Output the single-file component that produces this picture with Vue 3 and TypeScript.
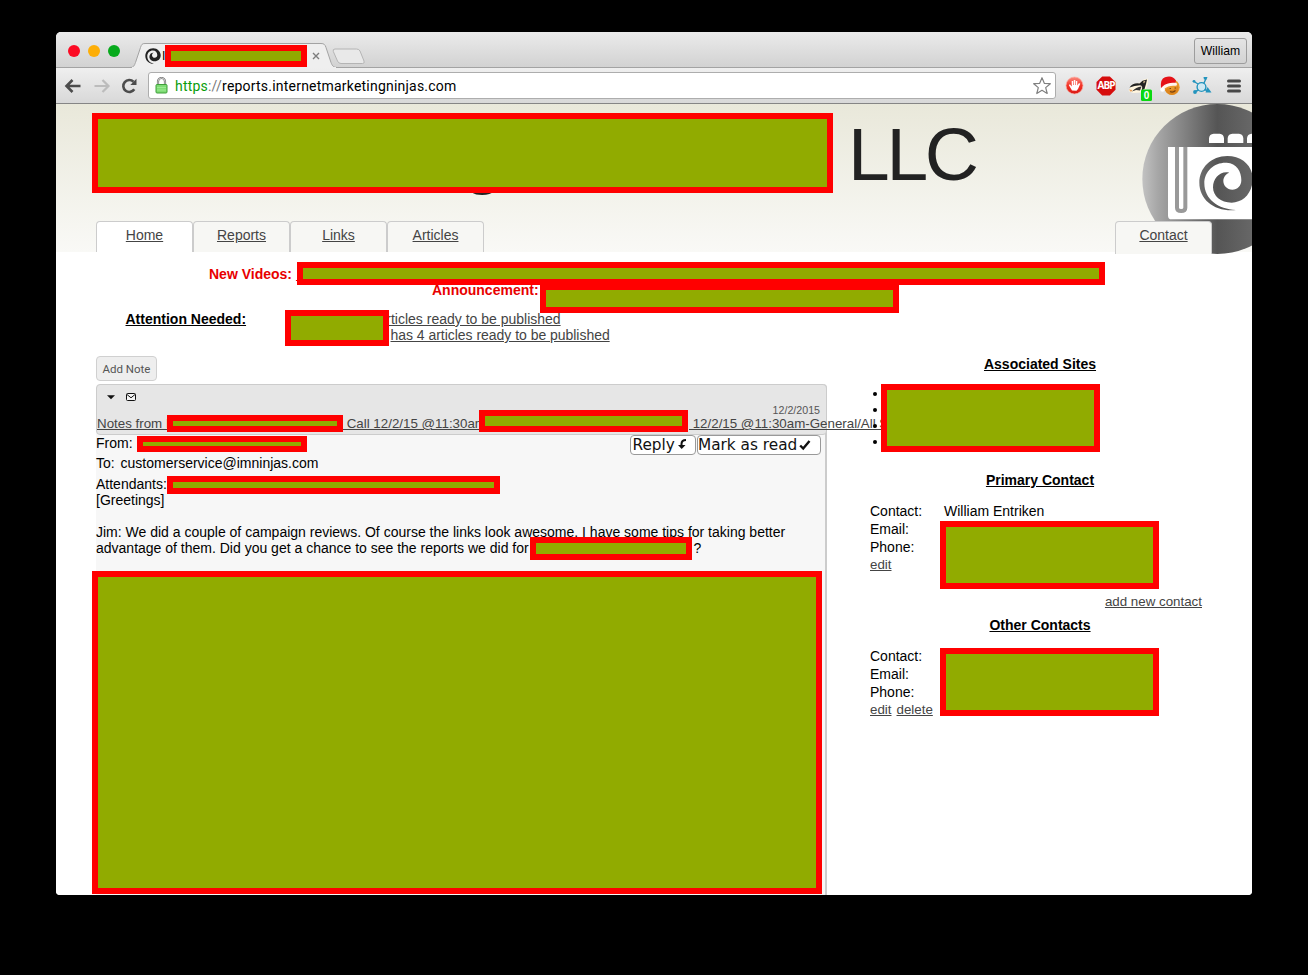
<script setup lang="ts">
interface Redaction { x: number; y: number; w: number; h: number }

const redactions: Redaction[] = [
  { x: 165, y: 45, w: 142, h: 22 },
  { x: 92, y: 113, w: 741, h: 80 },
  { x: 297, y: 262, w: 808, h: 23 },
  { x: 540, y: 284, w: 359, h: 29 },
  { x: 285, y: 310, w: 104, h: 36 },
  { x: 167, y: 415, w: 176, h: 17 },
  { x: 479, y: 410, w: 209, h: 22 },
  { x: 137, y: 436, w: 170, h: 16 },
  { x: 167, y: 476, w: 333, h: 18 },
  { x: 530, y: 537, w: 162, h: 23 },
  { x: 92, y: 571, w: 730, h: 323 },
  { x: 881, y: 384, w: 219, h: 68 },
  { x: 940, y: 521, w: 219, h: 68 },
  { x: 940, y: 648, w: 219, h: 68 },
]
const place = (r: Redaction) => ({ left: `${r.x}px`, top: `${r.y}px`, width: `${r.w}px`, height: `${r.h}px` })

const tabs = ['Home', 'Reports', 'Links', 'Articles']
const swirl =
  'M438 330C375 336 328 300 328 248C328 203 364 168 412 168C458 168 490 200 488 240C486 282 458 308 425 308C392 308 369 288 369 262C369 235 390 212 418 218C407 222 400 232 400 243C400 256 411 269 427 269C442 269 454 258 454 240C454 215 440 190 410 188C375 186 343 212 343 250C343 298 385 328 438 330Z'
</script>

<template>
  <div class="desktop">
    <div class="window">
      <div class="tabstrip">
        <div class="lights"><i class="red"></i><i class="amber"></i><i class="green"></i></div>
        <div class="btab">
          <svg class="btab-shape" width="208" height="25" viewBox="0 0 208 25">
            <path d="M0 24.5C4 24.5 4.500 22 5.500 19.500L10.500 4.500C11.500 1.500 12 .5 15 .5H191C194 .5 195 1.500 196 4.500L201 19.500C202 22 203 24.500 207 24.500" fill="#efefef" stroke="#a3a3a3" />
            <path d="M2 24.500H206" stroke="#efefef" />
          </svg>
          <svg class="favicon" width="16" height="16" viewBox="0 0 16 16">
            <path d="M8.200 15.600A7.700 7.700 0 1 1 15.600 8.600" fill="none" stroke="#222" stroke-width="0" />
            <path d="M9 15.800C4 16 .3 12.500 .3 8C.3 3.500 3.800 .2 8.200 .2C12.500 .2 15.700 3.500 15.700 7.300C15.700 11 13 13.300 9.800 13.300C6.500 13.300 4.400 11.200 4.400 8.700C4.400 6.200 6.300 4.500 8.700 4.700C7.500 5.200 7 6.200 7 7.200C7 8.700 8.200 9.800 9.700 9.800C11.200 9.800 12.300 8.700 12.300 7C12.300 4.500 10.500 2.600 7.900 2.600C4.700 2.600 2.300 5 2.300 8.300C2.300 12.500 5 15 9 15.800Z" fill="#222" />
          </svg>
          <span class="btab-title">I</span>
          <svg class="close" width="8" height="8" viewBox="0 0 8 8"><path d="M1 1L7 7M7 1L1 7" stroke="#7d7d7d" stroke-width="1.400" /></svg>
        </div>
        <svg class="newtab" width="34" height="17" viewBox="0 0 34 17">
          <path d="M3 1H24.500Q27 1 28 3L32 13Q33 15.500 30.500 15.500H9Q6.500 15.500 5.500 13L1.300 3.500Q.5 1 3 1Z" fill="#e9e9e9" stroke="#b4b4b4" />
        </svg>
        <button class="user">William</button>
      </div>

      <div class="toolbar">
        <svg class="back" width="18" height="16" viewBox="0 0 18 16"><path d="M8.500 2L2.500 8L8.500 14M3 8H16.500" fill="none" stroke="#4c4c4c" stroke-width="2.600" /></svg>
        <svg class="fwd" width="18" height="16" viewBox="0 0 18 16"><path d="M9.500 2L15.500 8L9.500 14M15 8H1.500" fill="none" stroke="#bcbcbc" stroke-width="2.200" /></svg>
        <svg class="reload" width="16" height="16" viewBox="0 0 16 16"><path d="M13.300 11.300A6 6 0 1 1 12.500 3.700" fill="none" stroke="#4c4c4c" stroke-width="2.600" /><path d="M15.500 .8V7H9.300Z" fill="#4c4c4c" /></svg>
        <div class="omnibox">
          <svg class="lock" width="13" height="17" viewBox="0 0 13 17">
            <path d="M3 8V4.500A3.500 3.500 0 0 1 10 4.500V8" fill="none" stroke="#777" stroke-width="2.200" />
            <path d="M3 8V4.500A3.500 3.500 0 0 1 10 4.500V8" fill="none" stroke="#ddd" stroke-width=".8" />
            <rect x="1" y="7.500" width="11" height="8.500" rx="1" fill="#7edc74" stroke="#3f9f3a" />
            <path d="M2 10.500H11M2 13H11" stroke="#9cea92" />
          </svg>
          <span class="url"><span class="secure">https</span><span class="slashes">://</span>reports.internetmarketingninjas.com</span>
          <svg class="star" width="20" height="20" viewBox="0 0 20 20"><path d="M10 1.700L12.300 7.300L18.300 7.700L13.700 11.600L15.200 17.500L10 14.300L4.800 17.500L6.300 11.600L1.700 7.700L7.700 7.300Z" fill="#fff" stroke="#808080" stroke-width="1.200" stroke-linejoin="round" /></svg>
        </div>
        <svg class="ext" width="20" height="20" viewBox="0 0 20 20">
          <defs><linearGradient id="hand" x2="0" y2="1"><stop offset="0" stop-color="#fb8c80" /><stop offset=".5" stop-color="#f23427" /><stop offset="1" stop-color="#d91813" /></linearGradient></defs>
          <circle cx="10.500" cy="9.500" r="8.500" fill="url(#hand)" stroke="#f9b1a8" stroke-width=".7" />
          <path d="M8 14.500L4.800 9L6 8.300L7.700 10.500V5H9.200V9L9.800 9V4H11.300V9H11.900V5H13.300V9.500L15 7L16.300 7.800L14 13L12.500 14.800Z" fill="#fff" />
        </svg>
        <svg class="ext" width="20" height="20" viewBox="0 0 20 20">
          <path d="M6.200 .5H13.800L19.500 6V13.800L13.800 19.500H6.200L.5 13.800V6Z" fill="#d60d0d" />
          <text x="10" y="13.400" class="abp" text-anchor="middle">ABP</text>
        </svg>
        <svg class="ext badger" width="24" height="24" viewBox="0 0 24 24">
          <path d="M.5 14L4 7.500L12 5.500L15.500 2.500L20 1.500L20 6L18 12L13 15.500L5 16Z" fill="#fff5de" />
          <path d="M1.500 10.500Q5 5.500 11.500 6.500L14.500 3.800L19 2.500L18 7L16.500 12L13.500 13.500Q15.500 8.500 12 8.200Q6.500 8.500 1.500 10.500Z" fill="#222" />
          <path d="M4 14.500Q8 10 13.500 9.500L12 13.500L8 13Z" fill="#333" /><path d="M1 12.500L4.500 13L3 15Z" fill="#e79c55" /><path d="M15 4.800L17.500 3.800L16 6.500Z" fill="#e6c89c" />
          <rect x="13" y="12.500" width="11" height="11.500" rx="1.500" fill="#0ad810" />
          <text x="18.500" y="21.500" class="badge" text-anchor="middle">0</text>
        </svg>
        <svg class="ext" width="20" height="20" viewBox="0 0 20 20">
          <circle cx="12" cy="11.300" r="7.700" fill="#e99a2f" /><path d="M8 12Q13 17 18 9Q20 16 14 18.500Q8 20 5 14Z" fill="#dd861e" />
          <path d="M1 12Q0 3 5 1.300Q12-1.500 16 4.500L15 8.500Q9 6 3.500 12Z" fill="#e51218" />
          <path d="M3.500 11.500Q8 7.500 15.500 8.300" fill="none" stroke="#fff4ec" stroke-width="3" stroke-linecap="round" /><circle cx="2.500" cy="13.500" r="2.200" fill="#fff" />
          <path d="M9.500 12.500h1.500M14.500 12h1.500M10 15.500Q13 17 15.500 14.500" stroke="#7a4310" fill="none" stroke-width="1.200" />
        </svg>
        <svg class="ext" width="20" height="20" viewBox="0 0 20 20">
          <g fill="none" stroke="#2394bd" stroke-width="1.400"><circle cx="9.500" cy="11" r="4.400" fill="#cfe9f3" /><path d="M6 8L2 5.500M11.800 7.500L14 2.500M6.500 14L2.500 16M12.500 13.500L17.500 15.500" /></g>
          <g fill="#2394bd"><circle cx="2" cy="5.300" r="1.400" /><path d="M11.500 1H15.500L14.500 3.500H12Z" /><circle cx="3" cy="16" r="1.900" /><path d="M15.500 11L19.500 16.500L13.500 16.500Z" /></g>
        </svg>
        <svg class="menu" width="14" height="14" viewBox="0 0 14 14"><path d="M1.500 2H12.500M1.500 7H12.500M1.500 12H12.500" stroke="#484848" stroke-width="3" stroke-linecap="round" /></svg>
      </div>

      <main class="page">
        <header class="banner">
          <svg class="logo" width="110" height="150" viewBox="156 12 330 450">
            <defs><linearGradient id="disc" gradientUnits="userSpaceOnUse" x1="157" x2="607" y1="0" y2="0"><stop offset="0" stop-color="#c2c2c2" /><stop offset=".1" stop-color="#a7a7a7" /><stop offset=".5" stop-color="#555" /><stop offset=".72" stop-color="#666" /><stop offset="1" stop-color="#aaa" /></linearGradient></defs>
            <circle cx="382" cy="237" r="225" fill="url(#disc)" />
            <path d="M357 129V115Q358 102 371 101H389Q401 102 402 115V129ZM413 129V115Q414 102 427 101H447Q459 102 460 115V129ZM471 129V115Q472 102 485 101H520V129Z" fill="#fff" />
            <path d="M234 141H520V358H245Q234 358 234 347Z" fill="#fff" />
            <path d="M261 141V323Q261 333 273.500 333Q286 333 286 323V141" fill="none" stroke="#999" stroke-width="12" />
            <path :d="swirl" fill="url(#disc)" />
          </svg>
          <h1><span class="g">g</span><span>LLC</span></h1>
          <nav>
            <a v-for="(t, i) in tabs" :key="t" :class="{ active: i === 0 }">{{ t }}</a>
            <a class="contact">Contact</a>
          </nav>
        </header>

        <section class="notices">
          <p class="videos">New Videos: <u>&nbsp;</u></p>
          <p class="announce">Announcement:</p>
        </section>

        <section class="attention">
          <b>Attention Needed:</b>
          <div class="alerts"><a class="first">articles ready to be published</a><a class="second">has 4 articles ready to be published</a></div>
        </section>

        <div class="columns">
          <div class="left">
            <button class="add">Add Note</button>
            <article class="note">
              <div class="note-head">
                <div class="icons">
                  <svg width="8" height="5" viewBox="0 0 8 5"><path d="M0 .3H8L4 4.300Z" fill="#111" /></svg>
                  <svg width="10" height="8" viewBox="0 0 10 8"><rect x=".5" y=".5" width="9" height="7" rx="1" fill="#f4f4f4" stroke="#111" /><path d="M1 1.500L5 4.800L9 1.500" fill="none" stroke="#111" /></svg>
                </div>
                <div class="date">12/2/2015</div>
                <a class="subject"><span class="s1">Notes from M</span><span class="s2">&nbsp;Call 12/2/15 @11:30am</span><span class="s3">&nbsp;12/2/15 @11:30am-General/All S</span></a>
              </div>
              <div class="note-body">
                <div class="from">
                  <span>From:</span>
                  <div class="actions">
                    <button class="reply">Reply<svg width="10" height="12" viewBox="0 0 10 12"><path d="M8 1Q3.500 1 3.500 5V8" fill="none" stroke="#111" stroke-width="2" /><path d="M0 6H7.500L3.700 10Z" fill="#111" /></svg></button>
                    <button class="mark">Mark as read<svg width="12" height="12" viewBox="0 0 12 12"><path d="M1.200 6.500L4.200 9.500L10.500 2" fill="none" stroke="#111" stroke-width="2.400" /></svg></button>
                  </div>
                </div>
                <div class="to">To: <span>customerservice@imninjas.com</span></div>
                <div>Attendants:</div>
                <div>[Greetings]</div>
                <p>Jim: We did a couple of campaign reviews. Of course the links look awesome. I have some tips for taking better<br />advantage of them. Did you get a chance to see the reports we did for <span class="q">?</span></p>
              </div>
            </article>
          </div>

          <aside>
            <h2>Associated Sites</h2>
            <ul><li v-for="n in 4" :key="n"></li></ul>
            <h2>Primary Contact</h2>
            <dl><dt>Contact:</dt><dd>William Entriken</dd><dt>Email:</dt><dd></dd><dt>Phone:</dt><dd></dd></dl>
            <div class="links"><a>edit</a></div>
            <div class="more"><a>add new contact</a></div>
            <h2>Other Contacts</h2>
            <dl><dt>Contact:</dt><dd></dd><dt>Email:</dt><dd></dd><dt>Phone:</dt><dd></dd></dl>
            <div class="links"><a>edit</a><a>delete</a></div>
          </aside>
        </div>
      </main>
    </div>

    <div v-for="(r, i) in redactions" :key="i" class="redaction" :style="place(r)"></div>
  </div>
</template>

<style>
body { background: #000; overflow: hidden; }
</style>

<style scoped>
* { box-sizing: border-box; }
.desktop { position: relative; width: 1308px; height: 975px; padding: 32px 56px 80px; background: #000; overflow: hidden; font: 14px/16px "Liberation Sans", Arial, sans-serif; color: #000; }
.window { width: 1196px; height: 863px; border-radius: 5px 5px 4px 4px; overflow: hidden; background: #fff; }
svg { display: block; flex: none; }
button { padding: 0; margin: 0; color: inherit; }
.redaction { position: absolute; background: #91ab00; border: 6px solid #f00; }

.tabstrip { display: flex; height: 36px; background: linear-gradient(#ebebeb, #d2d2d2); border-bottom: 1px solid #a3a3a3; }
.lights { display: flex; gap: 8px; padding: 13px 0 0 12px; width: 74px; }
.lights i { width: 12px; height: 12px; border-radius: 50%; }
.red { background: #fc0b24; }
.amber { background: #fdae07; }
.green { background: #07aa1c; }
.btab { position: relative; display: flex; width: 208px; height: 25px; margin-top: 11px; align-items: center; padding-left: 15px; flex: none; }
.btab-shape { position: absolute; left: 0; top: 0; }
.favicon, .btab-title, .close { position: relative; }
.btab-title { margin-left: 1px; width: 150px; font-size: 12px; }
.newtab { margin: 16px 0 0 -6px; }
.user { margin: 6px 5px 0 auto; width: 53px; height: 26px; border: 1px solid #9d9d9d; border-radius: 3px; background: linear-gradient(#e4e4e4, #d3d3d3); font: 12.200px "Liberation Sans", Arial, sans-serif; }

.toolbar { display: flex; align-items: center; height: 36px; padding-left: 8px; background: linear-gradient(#efefef, #d8d8d8); border-bottom: 1px solid #858585; }
.fwd { margin-left: 11px; }
.reload { margin-left: 10px; }
.omnibox { display: flex; align-items: center; width: 908px; height: 27px; margin-left: 11px; padding: 0 3px 0 6px; border: 1px solid #adadad; border-radius: 3px; background: #fff; flex: none; }
.url { margin-left: 7px; font: 14px/18px Roboto, sans-serif; letter-spacing: .21px; }
.secure { color: #0a9d0a; }
.slashes { color: #777; }
.star { margin-left: auto; }
.ext { margin-left: 12px; overflow: visible; }
.omnibox + .ext { margin-left: 8px; }
.badger { margin: 7px -4px 0 12px; }
.abp { font: bold 10px "Open Sans", "Liberation Sans", sans-serif; letter-spacing: -1px; fill: #fff; }
.badge { font: bold 10px "Liberation Sans", sans-serif; fill: #fff; }
.menu { margin-left: 15px; }

.page { height: 791px; background: #fff; }
.banner { position: relative; height: 148px; padding: 0 40px; background: linear-gradient(#e9e8da, #f9f9f6); }
.logo { position: absolute; right: 0; top: 0; }
h1 { display: flex; margin: 0; height: 117px; padding: 8px 0 0 366px; font-size: 75px; line-height: 84px; font-weight: 400; letter-spacing: -3.300px; color: #222; }
.g { width: 386px; }
nav { position: relative; display: flex; }
nav a { width: 97px; height: 31px; padding-top: 5px; border: 1px solid #ccc; border-bottom: 0; border-radius: 4px 4px 0 0; background: #f7f7f4; color: #444; text-align: center; line-height: 17px; text-decoration: underline; }
nav a.active { background: #fff; }
nav .contact { margin-left: auto; height: 33px; }
a { color: #444; text-decoration: underline; white-space: nowrap; }

.notices { padding-top: 14px; font-weight: 700; color: #e80000; }
.notices p { margin: 0; }
.videos { padding-left: 153px; }
.announce { padding-left: 376px; }
.attention { display: flex; padding: 13px 0 0 69.500px; height: 58px; }
.attention b { width: 120px; white-space: nowrap; text-decoration: underline; }
.alerts { display: flex; flex-direction: column; margin-left: 133px; }
.second { margin-left: 12px; letter-spacing: -.03px; }

.columns { display: flex; padding-left: 40px; }
.left { width: 731px; }
.add { display: block; width: 61px; height: 25px; border: 1px solid #d0d0d0; border-radius: 4px; background: #eee; color: #555; font: 11.500px Roboto, sans-serif; }
.note { margin-top: 3px; height: 530px; border-right: 2px solid #ccc; border-radius: 4px 4px 0 0; background: #f7f7f7; }
.note-head { width: 731px; height: 51px; border: 1px solid #ccc; border-radius: 4px; background: #e6e6e6; }
.icons { display: flex; align-items: center; gap: 11px; height: 20px; padding: 4px 0 0 10px; }
.date { height: 11px; padding-right: 6px; font-size: 10.670px; line-height: 11px; text-align: right; color: #555; }
.subject { display: flex; font-size: 13.330px; }
.s1 { width: 246px; }
.s2 { width: 346px; }
.subject span { flex: none; text-decoration: underline; }
.note-body > div { height: 16px; }
.note-body .from { display: flex; justify-content: space-between; height: 20px; }
.note-body .to { height: 21px; }
.to span { margin-left: 2px; }
.actions { display: flex; gap: 1px; padding-right: 4px; }
.actions button { display: flex; align-items: center; height: 20px; border: 1px solid #999; border-radius: 4px; background: #fff; font: 15.300px "DejaVu Sans", Verdana, sans-serif; white-space: nowrap; color: #111; }
.actions .reply { width: 66px; padding-left: 1.500px; }
.reply svg { margin-left: 3px; }
.mark { width: 124px; }
.mark svg { margin-left: 2px; }
.note-body p { margin: 16px 0 0; white-space: nowrap; }
.q { margin-left: 161px; }

aside { width: 344px; margin-left: 41px; }
h2 { margin: 0; font-size: 14px; line-height: 16px; text-align: center; text-decoration: underline; }
ul { list-style: none; margin: 14px 0 22px; padding: 0 0 0 4.500px; }
li { display: flex; align-items: center; height: 16px; }
li::before { content: ""; width: 4.500px; height: 4.500px; border-radius: 50%; background: #000; }
dl { display: grid; grid-template-columns: 74px 1fr; grid-auto-rows: 18px; line-height: 18px; margin: 14px 0 0 2px; }
dd { margin: 0; }
.links { display: flex; gap: 5px; margin-left: 2px; font-size: 13.330px; line-height: 17px; }
.more { height: 29px; padding: 21px 10px 0 0; text-align: right; font-size: 13.330px; margin-bottom: 15px; }
</style>
